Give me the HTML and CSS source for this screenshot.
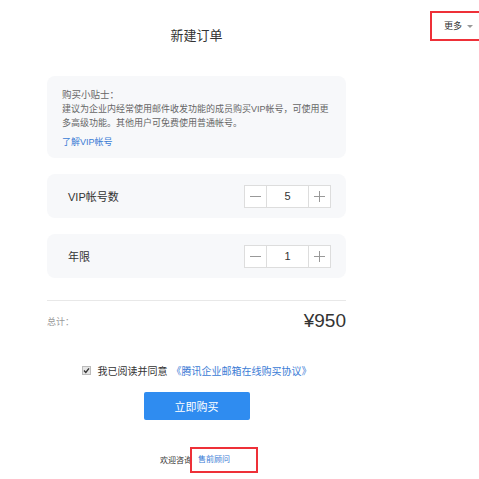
FILE: index.html
```html
<!DOCTYPE html>
<html lang="zh-CN">
<head>
    <meta charset="UTF-8">
    <meta name="viewport" content="width=device-width, initial-scale=1.0">
    <title>新建订单</title>
    <link rel="stylesheet" href="styles.css">
</head>
<body>

    <a class="mais" href="#">更多 <span class="seta"></span></a>

    <div class="pedido">
        <h1>新建订单</h1>

        <div class="dica">
            <p class="dica-titulo">购买小贴士：</p>
            <p>建议为企业内经常使用邮件收发功能的成员购买VIP帐号，可使用更多高级功能。其他用户可免费使用普通帐号。</p>
            <a class="dica-link" href="#">了解VIP帐号</a>
        </div>

        <div class="linha">
            <span class="rotulo">VIP帐号数</span>
            <div class="contador">
                <button class="menos"><svg width="11" height="11" viewBox="0 0 11 11"><path d="M0 5.5H11" stroke="#999" stroke-width="1"/></svg></button>
                <span class="valor">5</span>
                <button class="mais-btn"><svg width="11" height="11" viewBox="0 0 11 11"><path d="M0 5.5H11M5.5 0V11" stroke="#999" stroke-width="1"/></svg></button>
            </div>
        </div>

        <div class="linha">
            <span class="rotulo">年限</span>
            <div class="contador">
                <button class="menos"><svg width="11" height="11" viewBox="0 0 11 11"><path d="M0 5.5H11" stroke="#999" stroke-width="1"/></svg></button>
                <span class="valor">1</span>
                <button class="mais-btn"><svg width="11" height="11" viewBox="0 0 11 11"><path d="M0 5.5H11M5.5 0V11" stroke="#999" stroke-width="1"/></svg></button>
            </div>
        </div>

        <div class="total">
            <span class="total-rotulo">总计：</span>
            <span class="preco">¥950</span>
        </div>

        <div class="acordo">
            <span class="caixa"><svg width="7" height="7" viewBox="0 0 7 7"><path d="M1 3.6L2.8 5.4L6 1.4" fill="none" stroke="#333" stroke-width="1.4"/></svg></span>
            <span>我已阅读并同意</span>
            <a href="#">《腾讯企业邮箱在线购买协议》</a>
        </div>

        <div class="botoes">
            <button class="comprar">立即购买</button>
        </div>

        <div class="consulta">
            <span>欢迎咨询</span>
            <a class="destaque" href="#">售前顾问</a>
        </div>
    </div>

</body>
</html>
```

FILE: styles.css
```css
body {
    font-family: "Liberation Sans", "Noto Sans CJK SC", sans-serif;
    background-color: #ffffff;
    color: #333333;
    margin: 0;
    padding: 0;
}

a {
    color: #3a7bd5;
    text-decoration: none;
}

p {
    margin: 0;
}

.mais {
    position: absolute;
    top: 11px;
    left: 430px;
    width: 56px;
    height: 30px;
    box-sizing: border-box;
    border: 2px solid #ee3038;
    padding-left: 12px;
    color: #333333;
    font-size: 9px;
    line-height: 26px;
}

.seta {
    display: inline-block;
    width: 0;
    height: 0;
    margin-left: 2px;
    vertical-align: middle;
    border-left: 3px solid transparent;
    border-right: 3px solid transparent;
    border-top: 3px solid #999999;
}

.pedido {
    width: 299px;
    margin-left: 47px;
    padding-top: 26px;
    padding-bottom: 7px;
}

h1 {
    font-size: 13px;
    font-weight: normal;
    line-height: 20px;
    text-align: center;
    margin: 0 0 30px;
}

.dica {
    background-color: #f7f8fa;
    border-radius: 8px;
    padding: 12px 15px 9px;
    color: #666666;
    font-size: 9px;
    line-height: 14px;
}

.dica-titulo {
    font-size: 9.5px;
}

.dica-link {
    display: inline-block;
    margin-top: 5px;
}

.linha {
    display: flex;
    justify-content: space-between;
    align-items: center;
    height: 44px;
    margin-top: 16px;
    padding: 0 15px 0 21px;
    background-color: #f7f8fa;
    border-radius: 8px;
}

.rotulo {
    font-size: 11px;
    line-height: 16px;
    margin-top: 2px;
}

.contador {
    display: flex;
    width: 87px;
    height: 23px;
    border: 1px solid #dddddd;
    box-sizing: border-box;
    background-color: #ffffff;
}

.contador button {
    display: flex;
    justify-content: center;
    align-items: center;
    width: 21px;
    border: none;
    background: #ffffff;
    padding: 0;
}

.valor {
    flex: 1;
    border-left: 1px solid #dddddd;
    border-right: 1px solid #dddddd;
    text-align: center;
    font-size: 11px;
    line-height: 21px;
}

.total {
    display: flex;
    justify-content: space-between;
    align-items: center;
    height: 40px;
    margin-top: 22px;
    border-top: 1px solid #e8e8e8;
}

.total-rotulo {
    color: #999999;
    font-size: 9px;
}

.preco {
    font-size: 19px;
    color: #333333;
}

.acordo {
    display: flex;
    justify-content: center;
    align-items: center;
    gap: 4px;
    height: 18px;
    margin-top: 20px;
    font-size: 10px;
}

.caixa {
    display: flex;
    justify-content: center;
    align-items: center;
    width: 9px;
    height: 9px;
    box-sizing: border-box;
    border: 1px solid #bbbbbb;
    background-color: #e6e6e6;
    margin-right: 3px;
}

.botoes {
    display: flex;
    justify-content: center;
    margin-top: 13px;
}

.comprar {
    width: 106px;
    height: 28px;
    border: none;
    border-radius: 2px;
    background-color: #2f8cf0;
    color: #ffffff;
    font-family: inherit;
    font-size: 11px;
}

.consulta {
    display: flex;
    align-items: center;
    margin-top: 27px;
    padding-left: 113px;
    font-size: 8px;
    line-height: 13px;
}

.destaque {
    margin-left: -2px;
    padding: 4px 26px 5px 6px;
    border: 2px solid #ee3038;
}
```
